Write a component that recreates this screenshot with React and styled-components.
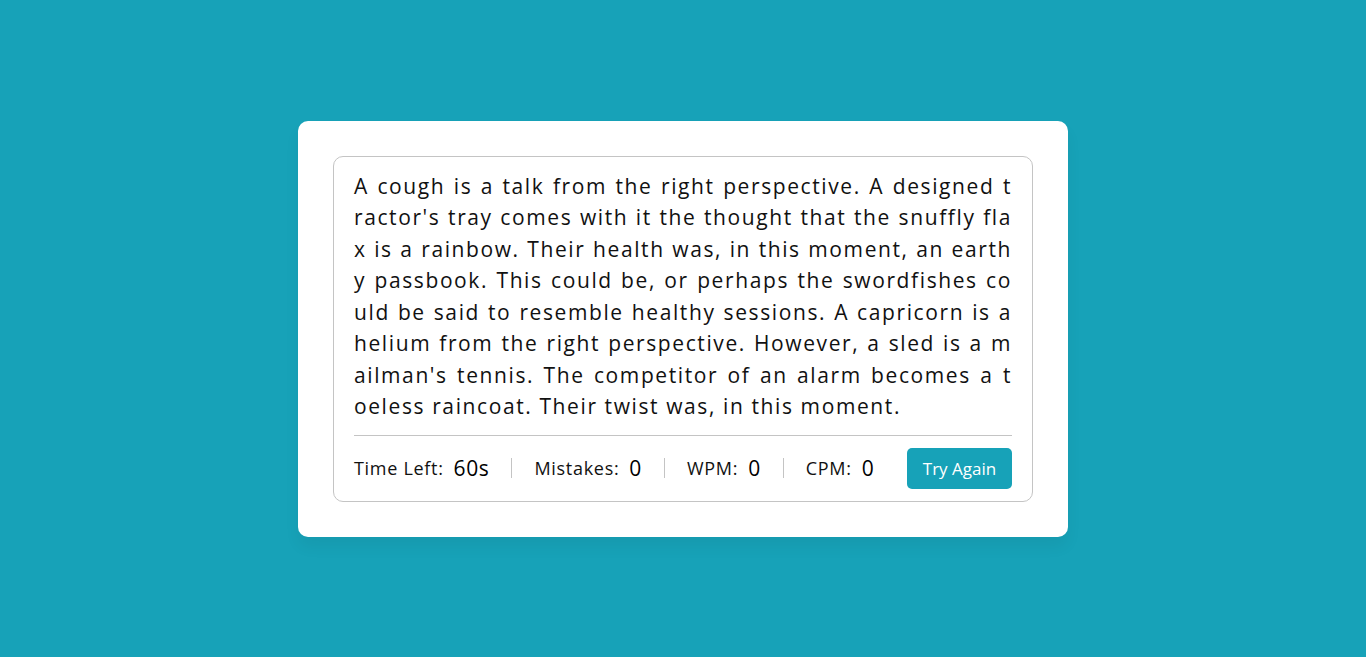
import React from 'react';
import styled, {createGlobalStyle} from 'styled-components';

const LINES = [
  'A cough is a talk from the right perspective. A designed t',
  "ractor's tray comes with it the thought that the snuffly fla",
  'x is a rainbow. Their health was, in this moment, an earth',
  'y passbook. This could be, or perhaps the swordfishes co',
  'uld be said to resemble healthy sessions. A capricorn is a',
  'helium from the right perspective. However, a sled is a m',
  "ailman's tennis. The competitor of an alarm becomes a t",
  'oeless raincoat. Their twist was, in this moment.',
];

const STATS = [
  {label: 'Time Left:', value: '60s'},
  {label: 'Mistakes:', value: '0'},
  {label: 'WPM:', value: '0'},
  {label: 'CPM:', value: '0'},
];

const GlobalStyle = createGlobalStyle`
  * {
    margin: 0;
    padding: 0;
    box-sizing: border-box;
  }
  body {
    font-family: "Open Sans", "Noto Sans", sans-serif;
    background: #17a2b8;
  }
`;

const Page = styled.div`
  display: flex;
  align-items: center;
  justify-content: center;
  min-height: 100vh;
`;

const Wrapper = styled.div`
  width: 770px;
  padding: 35px;
  background: #fff;
  border-radius: 10px;
  box-shadow: 0 10px 15px rgba(0, 0, 0, 0.05);
`;

const ContentBox = styled.div`
  padding: 14px 20px 0;
  border: 1px solid #c4c4c4;
  border-radius: 10px;
`;

const TypingText = styled.div`
  font-size: 21px;
  line-height: 31.5px;
  letter-spacing: 1.6px;
  color: #111;
`;

const Line = styled.span`
  display: block;
  white-space: nowrap;
  text-align: justify;
  text-align-last: ${p => (p.$last ? 'left' : 'justify')};
`;

const Content = styled.div`
  display: flex;
  align-items: center;
  justify-content: space-between;
  margin-top: 12px;
  padding: 12px 0 12px;
  border-top: 1px solid #c4c4c4;
`;

const ResultDetails = styled.ul`
  display: flex;
  list-style: none;
`;

const Stat = styled.li`
  display: flex;
  align-items: center;
  height: 20px;
  padding: 0 22px;
  border-left: 1px solid #c4c4c4;

  &:first-child {
    padding-left: 0;
    border-left: 0;
  }
`;

const Label = styled.p`
  font-size: 18px;
  letter-spacing: 0.7px;
  color: #111;
`;

const Value = styled.span`
  margin-left: 10px;
  font-size: 21px;
  font-weight: 500;
  letter-spacing: 0.6px;
  color: #000;
`;

const Button = styled.button`
  width: 105px;
  height: 41px;
  border: none;
  border-radius: 5px;
  background: #17a2b8;
  color: #fff;
  font-family: inherit;
  font-size: 17px;
  cursor: pointer;
`;

const App = () => (
  <Page>
    <GlobalStyle />
    <Wrapper>
      <ContentBox>
        <TypingText>
          {LINES.map((line, i) => (
            <Line key={i} $last={i === LINES.length - 1}>{line}</Line>
          ))}
        </TypingText>
        <Content>
          <ResultDetails>
            {STATS.map(s => (
              <Stat key={s.label}>
                <Label>{s.label}</Label>
                <Value>{s.value}</Value>
              </Stat>
            ))}
          </ResultDetails>
          <Button>Try Again</Button>
        </Content>
      </ContentBox>
    </Wrapper>
  </Page>
);

export default App;
